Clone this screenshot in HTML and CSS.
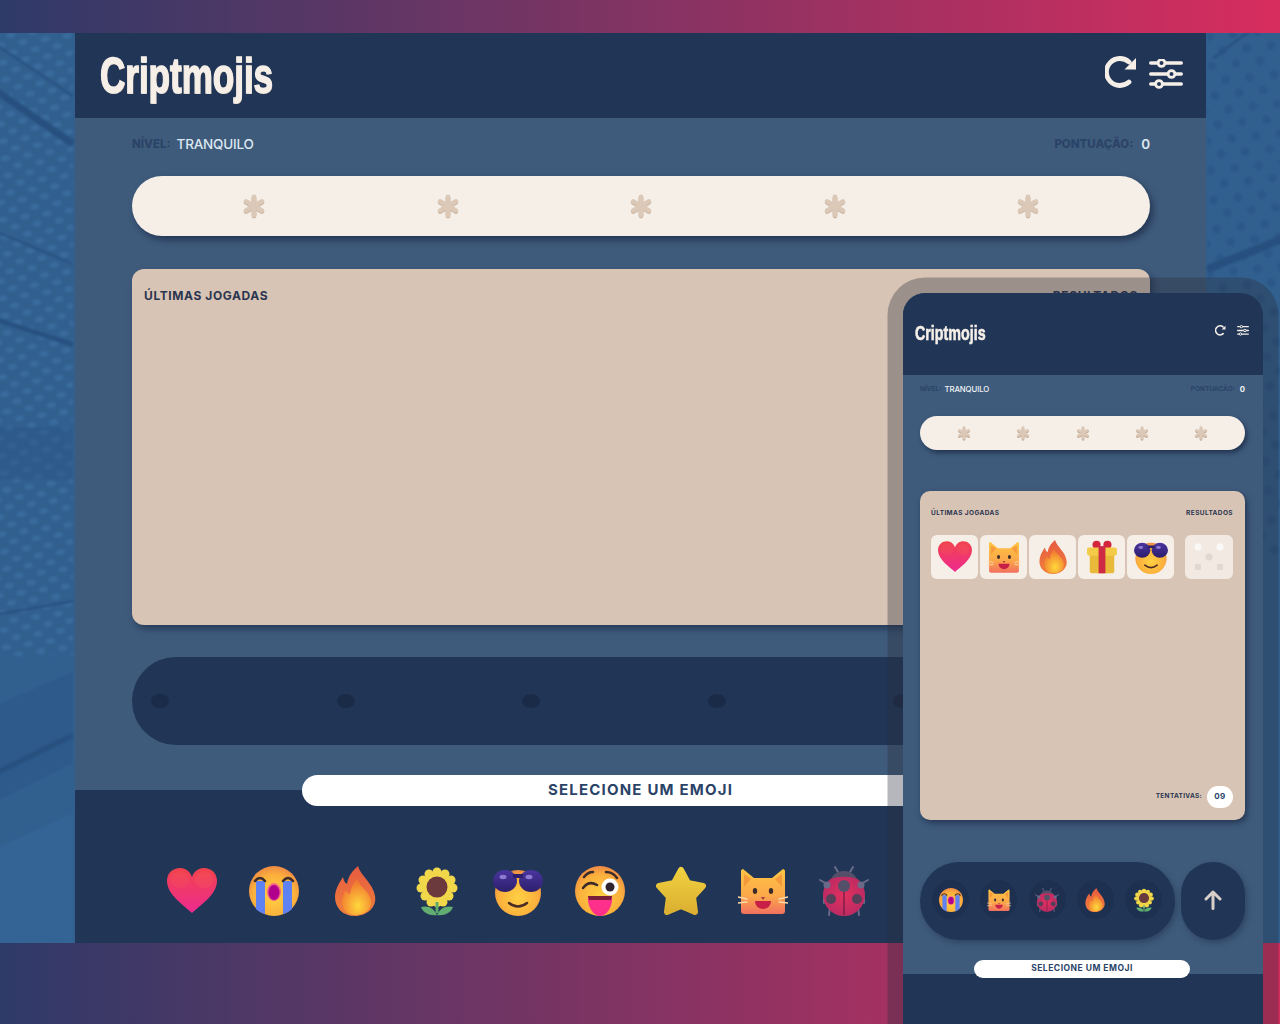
FILE: index.html
```html
<!DOCTYPE html>
<html lang="pt-BR">
<head>
    <meta charset="UTF-8">
    <meta name="viewport" content="width=device-width, initial-scale=1.0">
    <title>Criptmojis</title>
    <link rel="stylesheet" href="styles.css">
</head>
<body>
    <!-- emoji sprites -->
    <svg class="sprites" aria-hidden="true">
        <defs>
            <linearGradient id="g-heart" x1="0" y1="0" x2="0" y2="1"><stop offset="0" stop-color="#f2434c"/><stop offset="1" stop-color="#ee2a90"/></linearGradient>
            <radialGradient id="g-face" cx=".5" cy=".6" r=".6"><stop offset="0" stop-color="#ffd043"/><stop offset=".7" stop-color="#fbb03c"/><stop offset="1" stop-color="#ee8a45"/></radialGradient>
            <linearGradient id="g-fire" x1="0" y1="0" x2="0" y2="1"><stop offset="0" stop-color="#e65a40"/><stop offset="1" stop-color="#f0803c"/></linearGradient>
            <radialGradient id="g-flame" cx=".55" cy=".75" r=".7"><stop offset="0" stop-color="#ffd83c"/><stop offset="1" stop-color="#f0702f"/></radialGradient>
            <linearGradient id="g-star" x1="0" y1="0" x2="0" y2="1"><stop offset="0" stop-color="#efd03e"/><stop offset="1" stop-color="#dcb032"/></linearGradient>
            <linearGradient id="g-cat" x1="0" y1="0" x2="0" y2="1"><stop offset="0" stop-color="#ffc443"/><stop offset=".6" stop-color="#fba84a"/><stop offset="1" stop-color="#f2705f"/></linearGradient>
            <radialGradient id="g-bug" cx=".5" cy=".5" r=".6"><stop offset="0" stop-color="#e2305f"/><stop offset="1" stop-color="#b52a63"/></radialGradient>
            <linearGradient id="g-lens" x1="0" y1="0" x2="0" y2="1"><stop offset="0" stop-color="#4a35a0"/><stop offset="1" stop-color="#2d1f6b"/></linearGradient>
        </defs>
        <symbol id="e-heart" viewBox="0 0 50 50">
            <path fill="url(#g-heart)" d="M25 47C18 40 0 29 0 15 0 7 6 2 13 2c5 0 10 3 12 9 2-6 7-9 12-9 7 0 13 5 13 13 0 14-18 25-25 32z"/>
            <ellipse cx="37" cy="14" rx="9" ry="8" fill="#f86a60" opacity=".2"/>
            <ellipse cx="13" cy="14" rx="9" ry="8" fill="#f86a60" opacity=".15"/>
        </symbol>
        <symbol id="e-cry" viewBox="0 0 50 50">
            <circle cx="25" cy="25" r="25" fill="url(#g-face)"/>
            <path fill="#5f82f2" d="M7 15h9v33.300a25 25 0 0 1-9-5zM34 15h9v28.300a25 25 0 0 1-9 5z"/>
            <path fill="none" stroke="#3b2b2b" stroke-width="2.500" stroke-linecap="round" d="M6 15q5-6 10 0M34 15q5-6 10 0"/>
            <ellipse cx="25" cy="26" rx="7" ry="9" fill="#f4628a"/>
            <ellipse cx="25" cy="26.500" rx="5.500" ry="7.500" fill="#b0008c"/>
        </symbol>
        <symbol id="e-fire" viewBox="0 0 50 50">
            <path fill="url(#g-fire)" d="M28 0c2 9 15 17 17 30 2 11-8 20-20 20S5 42 5 31c0-7 4-14 8-20 1 4 2 6 4 7 1-7 5-13 11-18z"/>
            <path fill="url(#g-flame)" d="M27 12c1 8 13 13 14 23 1 9-7 14-16 14-8 0-13-6-13-13 0-5 2-9 4-12 1 3 3 4 4 4 1-6 3-11 7-16z"/>
        </symbol>
        <symbol id="e-sun" viewBox="0 0 50 50">
            <g fill="#f1d74a">
                <circle cx="25" cy="6" r="4.500"/><circle cx="33" cy="8" r="4.500"/><circle cx="39" cy="14" r="4.500"/><circle cx="41" cy="22" r="4.500"/><circle cx="37" cy="30" r="4.500"/><circle cx="31" cy="36" r="4.500"/><circle cx="19" cy="36" r="4.500"/><circle cx="13" cy="30" r="4.500"/><circle cx="9" cy="22" r="4.500"/><circle cx="11" cy="14" r="4.500"/><circle cx="17" cy="8" r="4.500"/><circle cx="25" cy="37" r="4"/>
            </g>
            <circle cx="25" cy="21" r="14" fill="#f1d74a"/>
            <circle cx="25" cy="21" r="10.500" fill="#6a3a3c"/>
            <path stroke="#5da86a" stroke-width="3" d="M25 36v11"/>
            <path fill="#62ad72" d="M25 49c-7 1-14-2-16-8 7-2 13 1 16 8zM25 49c7 1 14-2 16-8-7-2-13 1-16 8z"/>
        </symbol>
        <symbol id="e-cool" viewBox="0 0 50 50">
            <circle cx="25" cy="27" r="23" fill="url(#g-face)"/>
            <ellipse cx="12" cy="15" rx="12" ry="11" fill="url(#g-lens)"/>
            <ellipse cx="38" cy="15" rx="12" ry="11" fill="url(#g-lens)"/>
            <path stroke="#2d1f6b" stroke-width="4" d="M20 10h10"/>
            <ellipse cx="10" cy="11" rx="3.500" ry="2.200" fill="#8d7bd2"/><ellipse cx="36" cy="11" rx="3.500" ry="2.200" fill="#8d7bd2"/>
            <path fill="none" stroke="#4a2c24" stroke-width="2.500" stroke-linecap="round" d="M16 37q9 7 18 0"/>
        </symbol>
        <symbol id="e-wink" viewBox="0 0 50 50">
            <circle cx="25" cy="25" r="25" fill="url(#g-face)"/>
            <path fill="none" stroke="#3b2b2b" stroke-width="2.500" stroke-linecap="round" d="M8 22q6-8 14-3M9 11q4-5 9-5M31 6q7 0 11 6"/>
            <circle cx="35" cy="21" r="8.500" fill="#fff"/><circle cx="35" cy="21" r="4.500" fill="#2e2430"/>
            <path fill="#ff2f8c" d="M13 30h24c1 10-5 20-12 20S12 40 13 30z"/>
            <path fill="#7a1f3a" d="M13 30h24l-1 4H14z"/>
        </symbol>
        <symbol id="e-star" viewBox="0 0 50 50">
            <path fill="url(#g-star)" stroke="url(#g-star)" stroke-width="6" stroke-linejoin="round" d="M25 4l7 13 15 3-10 11 2 15-14-6-14 6 2-15L3 20l15-3z"/>
        </symbol>
        <symbol id="e-cat" viewBox="0 0 50 50">
            <path fill="url(#g-cat)" d="M5 3l11 9h18l11-9c1 0 2 1 2 2v40c0 2-1 3-3 3H6c-2 0-3-1-3-3V5c0-1 1-2 2-2z"/>
            <path fill="#f59a3c" d="M6 8l7 5-7 8zM44 8l-7 5 7 8z"/>
            <ellipse cx="17" cy="25" rx="2.200" ry="3" fill="#3b2b2b"/><ellipse cx="33" cy="25" rx="2.200" ry="3" fill="#3b2b2b"/>
            <path fill="#c71f45" d="M17 35h16c0 5-4 8-8 8s-8-3-8-8z"/>
            <path fill="#a83a3a" d="M23 31h4l-2 3z"/>
            <path fill="none" stroke="#ffd9a8" stroke-width="1.300" stroke-linecap="round" d="M0 31l9 2M0 37l9-1M50 31l-9 2M50 37l-9-1"/>
        </symbol>
        <symbol id="e-bug" viewBox="0 0 50 50">
            <path fill="none" stroke="#6b6a88" stroke-width="2" stroke-linecap="round" d="M19 6l-3-5M31 6l3-5M8 18L1 14M42 18l7-4M5 28v9M45 28v9M11 41l-1 8M39 41l1 8"/>
            <circle cx="25" cy="29" r="21" fill="url(#g-bug)"/>
            <path fill="#55506a" d="M12 13c3-6 8-8 13-8s10 2 13 8c-8-3-18-3-26 0z"/>
            <circle cx="25" cy="20" r="6" fill="#55506a"/><circle cx="12" cy="33" r="5" fill="#55405a"/><circle cx="38" cy="33" r="5" fill="#55405a"/>
            <circle cx="8" cy="19" r="3.500" fill="#6b6a88"/><circle cx="42" cy="19" r="3.500" fill="#6b6a88"/>
            <path stroke="#7c2048" stroke-width="1.500" d="M25 26v23"/>
        </symbol>
        <symbol id="e-gift" viewBox="0 0 50 50">
            <circle cx="17" cy="7" r="6" fill="#d3263e"/><circle cx="33" cy="7" r="6" fill="#d3263e"/>
            <rect x="7" y="16" width="36" height="33" rx="3" fill="#e9b93a"/>
            <rect x="3" y="11" width="44" height="12" rx="3" fill="#f3cb48"/>
            <rect x="20" y="9" width="10" height="40" fill="#cf2a45"/>
        </symbol>
        <symbol id="i-star" viewBox="0 0 24 24">
            <path stroke="#dcc8b6" stroke-width="4.800" stroke-linecap="round" d="M12 3v18M4.200 7.500l15.600 9M19.800 7.500l-15.600 9"/>
        </symbol>
        <symbol id="i-refresh" viewBox="0 0 32 33">
            <path fill="none" stroke="#f5efe8" stroke-width="4.800" stroke-linecap="round" d="M24 26A13.500 13.500 0 1 1 24 6"/>
            <path fill="#f5efe8" d="M31 2v11.500H19.500z"/>
        </symbol>
        <symbol id="i-sliders" viewBox="0 0 34 30">
            <path stroke="#f5efe8" stroke-width="3.600" stroke-linecap="round" d="M1.800 4h30.400M1.800 15h30.400M1.800 25h30.400"/>
            <circle cx="12.500" cy="4" r="3.400" fill="#213657" stroke="#f5efe8" stroke-width="2.800"/>
            <circle cx="22.500" cy="15" r="3.400" fill="#213657" stroke="#f5efe8" stroke-width="2.800"/>
            <circle cx="10" cy="25" r="3.400" fill="#213657" stroke="#f5efe8" stroke-width="2.800"/>
        </symbol>
    </svg>

    <section class="hero">
        <svg class="hero-art" viewBox="0 0 1280 910" preserveAspectRatio="none" aria-hidden="true">
            <defs>
                <pattern id="dots-light" width="22" height="17" patternUnits="userSpaceOnUse" patternTransform="rotate(-8)">
                    <ellipse cx="6" cy="4" rx="4.500" ry="2.800" fill="#4b86bb" opacity=".3"/>
                    <ellipse cx="17" cy="12.500" rx="4.500" ry="2.800" fill="#4b86bb" opacity=".3"/>
                </pattern>
                <pattern id="dots-dark" width="24" height="29" patternUnits="userSpaceOnUse" patternTransform="rotate(-6)">
                    <circle cx="6" cy="7" r="4.500" fill="#234a7c" opacity=".4"/>
                    <circle cx="18" cy="21" r="4.500" fill="#234a7c" opacity=".4"/>
                </pattern>
            </defs>
            <rect x="-10" y="-10" width="1300" height="930" fill="#31608f"/>
            <rect x="-10" width="90" height="620" fill="url(#dots-light)"/>
            <rect x="1200" width="90" height="520" fill="url(#dots-dark)"/>
            <path fill="#2b5586" opacity=".45" d="M-10 395h90v52H-10zM-10 770l90-45v-90l-90 40z"/>
            <path fill="#3a6c9e" opacity=".4" d="M-10 815l90-40v145h-90z"/>
            <g fill="none" stroke="#27507f">
                <path stroke-width="2" d="M-10 10l90 60"/>
                <path stroke-width="7" d="M-10 55l90 62"/>
                <path stroke-width="2" d="M-10 197l90 38"/>
                <path stroke-width="4.500" d="M-10 285l90 29"/>
                <path stroke-width="2.500" d="M-10 582l90-16"/>
                <path stroke-width="5" d="M-10 742l90-44"/>
                <path stroke-width="2.500" d="M1206 33l44-33"/>
                <path stroke-width="8" d="M1200 240l90-36"/>
            </g>
        </svg>

        <main class="window">
            <header class="top-bar">
                <h1 class="logo">Criptmojis</h1>
                <div class="top-icons">
                    <svg class="icon-refresh"><use href="#i-refresh"/></svg>
                    <svg class="icon-sliders"><use href="#i-sliders"/></svg>
                </div>
            </header>
            <div class="game">
                <div class="stats">
                    <div class="stat"><span class="stat-label">NÍVEL:</span><span class="stat-value">TRANQUILO</span></div>
                    <div class="stat stat-score"><span class="stat-label">PONTUAÇÃO:</span><span class="stat-value">0</span></div>
                </div>
                <div class="secret">
                    <svg class="star"><use href="#i-star"/></svg>
                    <svg class="star"><use href="#i-star"/></svg>
                    <svg class="star"><use href="#i-star"/></svg>
                    <svg class="star"><use href="#i-star"/></svg>
                    <svg class="star"><use href="#i-star"/></svg>
                </div>
                <div class="board">
                    <div class="board-head"><span>ÚLTIMAS JOGADAS</span><span>RESULTADOS</span></div>
                </div>
                <div class="guess">
                    <div class="guess-slots">
                        <span class="slot-empty"></span>
                        <span class="slot-empty"></span>
                        <span class="slot-empty"></span>
                        <span class="slot-empty"></span>
                        <span class="slot-empty"></span>
                    </div>
                </div>
            </div>
            <footer class="picker">
                <div class="hint">SELECIONE UM EMOJI</div>
                <div class="emoji-row">
                    <svg class="emoji"><use href="#e-heart"/></svg>
                    <svg class="emoji"><use href="#e-cry"/></svg>
                    <svg class="emoji"><use href="#e-fire"/></svg>
                    <svg class="emoji"><use href="#e-sun"/></svg>
                    <svg class="emoji"><use href="#e-cool"/></svg>
                    <svg class="emoji"><use href="#e-wink"/></svg>
                    <svg class="emoji"><use href="#e-star"/></svg>
                    <svg class="emoji"><use href="#e-cat"/></svg>
                    <svg class="emoji"><use href="#e-bug"/></svg>
                </div>
            </footer>
        </main>
    </section>

    <!-- phone mockup on top of the desktop shot -->
    <div class="phone">
        <header class="phone-bar">
            <div class="phone-logo">Criptmojis</div>
            <div class="phone-icons">
                <svg class="phone-refresh"><use href="#i-refresh"/></svg>
                <svg class="phone-sliders"><use href="#i-sliders"/></svg>
            </div>
        </header>
        <div class="phone-game">
            <div class="phone-stats">
                <div class="stat"><span class="phone-label">NÍVEL:</span><span class="phone-value">TRANQUILO</span></div>
                <div class="stat"><span class="phone-label">PONTUAÇÃO:</span><span class="phone-value phone-score">0</span></div>
            </div>
            <div class="phone-secret">
                <svg class="phone-star"><use href="#i-star"/></svg>
                <svg class="phone-star"><use href="#i-star"/></svg>
                <svg class="phone-star"><use href="#i-star"/></svg>
                <svg class="phone-star"><use href="#i-star"/></svg>
                <svg class="phone-star"><use href="#i-star"/></svg>
            </div>
            <div class="phone-board">
                <div class="phone-head"><span>ÚLTIMAS JOGADAS</span><span>RESULTADOS</span></div>
                <div class="play">
                    <div class="play-emojis">
                        <span class="cell"><svg class="cell-emoji"><use href="#e-heart"/></svg></span>
                        <span class="cell"><svg class="cell-emoji"><use href="#e-cat"/></svg></span>
                        <span class="cell"><svg class="cell-emoji"><use href="#e-fire"/></svg></span>
                        <span class="cell"><svg class="cell-emoji"><use href="#e-gift"/></svg></span>
                        <span class="cell"><svg class="cell-emoji"><use href="#e-cool"/></svg></span>
                    </div>
                    <span class="cell cell-result">
                        <svg class="result-dots" viewBox="0 0 30 30">
                            <circle cx="4" cy="5" r="3.500" fill="#fff"/>
                            <circle cx="26" cy="5" r="3.500" fill="#fff"/>
                            <circle cx="15" cy="15" r="3.500" fill="#e2dbd4"/>
                            <rect x="1" y="22" width="6" height="6" rx="1" fill="#e2dbd4"/>
                            <rect x="23" y="22" width="6" height="6" rx="1" fill="#e2dbd4"/>
                        </svg>
                    </span>
                </div>
                <div class="tries"><span class="tries-label">TENTATIVAS:</span><span class="tries-count">09</span></div>
            </div>
            <div class="phone-guess">
                <div class="phone-slots">
                    <span class="round"><svg class="round-emoji"><use href="#e-cry"/></svg></span>
                    <span class="round"><svg class="round-emoji"><use href="#e-cat"/></svg></span>
                    <span class="round"><svg class="round-emoji"><use href="#e-bug"/></svg></span>
                    <span class="round"><svg class="round-emoji"><use href="#e-fire"/></svg></span>
                    <span class="round"><svg class="round-emoji"><use href="#e-sun"/></svg></span>
                </div>
                <div class="send">
                    <svg class="send-arrow" viewBox="0 0 18 20"><path fill="none" stroke="#d8cfc8" stroke-width="3" stroke-linecap="round" stroke-linejoin="round" d="M9 18.500V2M2 9l7-7 7 7"/></svg>
                </div>
            </div>
        </div>
        <footer class="phone-picker">
            <div class="phone-hint">SELECIONE UM EMOJI</div>
        </footer>
    </div>
</body>
</html>
```

FILE: styles.css
```css
* {
    box-sizing: border-box;
}
body {
    margin: 0;
    height: 1024px;
    overflow: hidden;
    position: relative;
    padding-top: 33px;
    background: linear-gradient(90deg, #2e3a68 0%, #d72d5e 100%);
    font-family: "Inter", "Liberation Sans", sans-serif;
}
.sprites {
    position: absolute;
    width: 0;
    height: 0;
}

/* blue band behind the desktop shot */
.hero {
    position: relative;
    height: 910px;
    padding-left: 75px;
    overflow: hidden;
}
/* a bit bigger than the band so the blur has no soft edge */
.hero-art {
    position: absolute;
    top: -8px;
    left: -8px;
    width: calc(100% + 16px);
    height: calc(100% + 16px);
    filter: blur(1px);
}
.window {
    position: relative;
    width: 1131px;
    height: 100%;
    display: flex;
    flex-direction: column;
    background: #3f5b7c;
}
.top-bar {
    height: 85px;
    flex: none;
    display: flex;
    justify-content: space-between;
    padding: 18px 23px 0 25px;
    background: #213657;
}
.logo {
    margin: 0;
    font-family: "Liberation Sans", sans-serif;
    font-size: 50px;
    line-height: 50px;
    font-weight: 700;
    color: #f5efe8;
    -webkit-text-stroke: 1.5px #f5efe8;
    transform: scaleX(0.7);
    transform-origin: left top;
    text-shadow: 1px 1px 0 #b9a89a;
}
.top-icons {
    display: flex;
    align-items: flex-start;
    gap: 12px;
    margin-top: 5px;
}
.icon-refresh {
    width: 32px;
    height: 33px;
}
.icon-sliders {
    width: 34px;
    height: 30px;
    margin-top: 3px;
}
.game {
    flex: 1;
    padding: 17px 56px 0 57px;
}
.stats {
    display: flex;
    justify-content: space-between;
    align-items: center;
    height: 18px;
}
.stat {
    display: flex;
    align-items: center;
}
.stat-label {
    font-size: 11.500px;
    font-weight: 800;
    color: #2b4367;
}
.stat-value {
    margin-left: 6px;
    font-size: 13.500px;
    font-weight: 500;
    color: #dce8f0;
    letter-spacing: -0.2px;
}
.stat-score .stat-value {
    margin-left: 8px;
    font-weight: 600;
}
.secret {
    height: 60px;
    margin-top: 23px;
    padding: 0 110px;
    display: flex;
    justify-content: space-between;
    align-items: center;
    border-radius: 30px;
    background: #f5efe8;
    box-shadow: 3px 4px 7px rgba(22, 36, 62, 0.65);
}
.star {
    width: 24px;
    height: 24px;
    filter: drop-shadow(0 1px 0 #c9b3a0);
}
.board {
    height: 356px;
    margin-top: 33px;
    padding: 20px 12px;
    border-radius: 12px;
    background: #d8c4b4;
    box-shadow: 3px 4px 7px rgba(22, 36, 62, 0.6);
}
.board-head {
    display: flex;
    justify-content: space-between;
    font-size: 12px;
    line-height: 14px;
    font-weight: 700;
    letter-spacing: 0.6px;
    color: #2b3550;
}
.guess {
    height: 88px;
    margin-top: 32px;
    margin-right: 104px;
    padding-left: 19px;
    display: flex;
    align-items: center;
    border-radius: 44px;
    background: #213657;
}
.guess-slots {
    display: flex;
    gap: 167.500px;
}
.slot-empty {
    width: 18px;
    height: 14px;
    border-radius: 50%;
    background: #1a2b48;
}
.picker {
    height: 153px;
    flex: none;
    background: #213657;
}
.hint {
    width: 678px;
    height: 31px;
    margin: -15px auto 0;
    border-radius: 16px;
    background: #fff;
    text-align: center;
    font-size: 15px;
    line-height: 30px;
    font-weight: 700;
    letter-spacing: 1.200px;
    color: #2b4367;
}
.emoji-row {
    display: flex;
    gap: 31.500px;
    margin-top: 60px;
    padding-left: 92px;
}
.emoji {
    width: 50px;
    height: 50px;
    flex: none;
}

/* phone */
.phone {
    position: absolute;
    left: 903px;
    top: 293px;
    width: 360px;
    height: 780px;
    display: flex;
    flex-direction: column;
    border-radius: 22px;
    background: #3f5b7c;
    box-shadow: 0 0 0 15.500px rgba(40, 45, 60, 0.34);
}
.phone-bar {
    height: 82px;
    flex: none;
    display: flex;
    justify-content: space-between;
    padding: 28px 14px 0 12px;
    border-radius: 22px 22px 0 0;
    background: #213657;
}
.phone-logo {
    font-family: "Liberation Sans", sans-serif;
    font-size: 21px;
    line-height: 24px;
    font-weight: 700;
    color: #f5efe8;
    -webkit-text-stroke: 0.6px #f5efe8;
    transform: scaleX(0.68);
    transform-origin: left top;
}
.phone-icons {
    display: flex;
    align-items: flex-start;
    gap: 11px;
    margin-top: 4px;
}
.phone-refresh {
    width: 11px;
    height: 11px;
}
.phone-sliders {
    width: 12px;
    height: 11px;
}
.phone-game {
    flex: none;
    height: 599px;
    padding: 9px 18px 0 17px;
}
.phone-stats {
    display: flex;
    justify-content: space-between;
    align-items: center;
    height: 10px;
}
.phone-label {
    font-size: 6.500px;
    font-weight: 700;
    color: #2b4367;
}
.phone-value {
    margin-left: 3px;
    font-size: 7.800px;
    font-weight: 500;
    letter-spacing: -0.1px;
    color: #f0f4f6;
}
.phone-score {
    margin-left: 5px;
    font-weight: 700;
}
.phone-secret {
    height: 34px;
    margin-top: 22px;
    padding: 0 37px;
    display: flex;
    justify-content: space-between;
    align-items: center;
    border-radius: 17px;
    background: #f5efe8;
    box-shadow: 2px 3px 5px rgba(22, 36, 62, 0.7);
}
.phone-star {
    width: 14px;
    height: 14px;
    filter: drop-shadow(0 1px 0 #bfa994);
}
.phone-board {
    height: 329px;
    margin-top: 41px;
    padding: 18px 12px 12px 11px;
    display: flex;
    flex-direction: column;
    border-radius: 10px;
    background: #d8c4b4;
    box-shadow: 2px 3px 6px rgba(22, 36, 62, 0.65);
}
.phone-head {
    display: flex;
    justify-content: space-between;
    font-size: 6.500px;
    line-height: 9px;
    font-weight: 700;
    letter-spacing: 0.4px;
    color: #2b3550;
}
.play {
    display: flex;
    justify-content: space-between;
    margin-top: 17px;
}
.play-emojis {
    display: flex;
    gap: 2px;
}
.cell {
    width: 47px;
    height: 44px;
    display: flex;
    align-items: center;
    justify-content: center;
    border-radius: 6px;
    background: #f5efe8;
}
.cell-result {
    width: 48px;
    opacity: 0.9;
}
.cell-emoji {
    width: 34px;
    height: 34px;
}
.result-dots {
    width: 30px;
    height: 30px;
}
.tries {
    margin-top: auto;
    display: flex;
    justify-content: flex-end;
    align-items: center;
    gap: 5px;
}
.tries-label {
    font-size: 6.500px;
    line-height: 6.500px;
    padding-bottom: 1px;
    font-weight: 700;
    letter-spacing: 0.3px;
    color: #2b3550;
}
.tries-count {
    width: 26px;
    height: 22px;
    border-radius: 11px;
    background: #fff;
    text-align: center;
    font-size: 8px;
    line-height: 21px;
    font-weight: 700;
    letter-spacing: 0.5px;
    color: #2b4367;
}
.phone-guess {
    display: flex;
    justify-content: space-between;
    margin-top: 42px;
}
.phone-slots {
    width: 255px;
    height: 78px;
    padding: 0 13px 3px 12px;
    display: flex;
    align-items: center;
    justify-content: space-between;
    border-radius: 39px;
    background: #213657;
    box-shadow: 2px 3px 6px rgba(22, 36, 62, 0.4);
}
.round {
    width: 37px;
    height: 39px;
    display: flex;
    align-items: center;
    justify-content: center;
    border-radius: 50%;
    background: #1d3050;
}
.round-emoji {
    width: 24px;
    height: 24px;
}
.send {
    width: 64px;
    height: 78px;
    padding-bottom: 3px;
    display: flex;
    align-items: center;
    justify-content: center;
    border-radius: 32px;
    background: #213657;
    box-shadow: 2px 3px 6px rgba(22, 36, 62, 0.4);
}
.send-arrow {
    width: 18px;
    height: 20px;
}
.phone-picker {
    flex: 1;
    background: #213657;
}
.phone-hint {
    width: 216px;
    height: 18px;
    margin: -14px auto 0 71px;
    border-radius: 9px;
    background: #fff;
    text-align: center;
    font-size: 8.500px;
    line-height: 17px;
    font-weight: 700;
    letter-spacing: 0.5px;
    color: #2b4367;
}
```
